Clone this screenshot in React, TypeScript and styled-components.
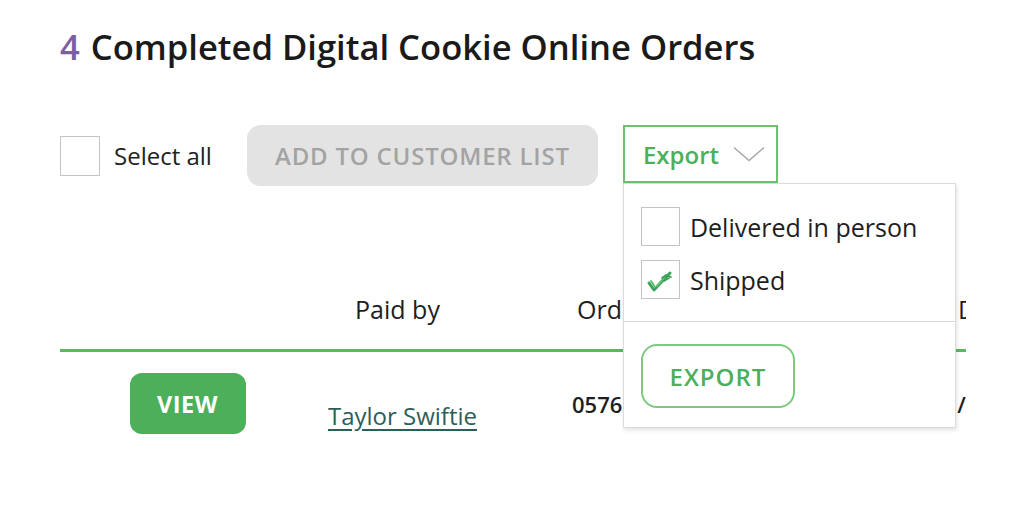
import React, {useState} from "react";
import styled, {createGlobalStyle} from "styled-components";

const GlobalStyle = createGlobalStyle`
  body {
    margin: 0;
    background: #fff;
    font-family: 'Open Sans', 'Noto Sans', sans-serif;
    color: #1e1e1e;
  }
`;

const Page = styled.div`
  padding: 24px 46px 0 60px;
  width: 906px;
`;

const Title = styled.h1`
  margin: 0;
  font-size: 34.6px;
  line-height: 46px;
  font-weight: 600;
  color: #1a1a1a;
`;

const Count = styled.span`
  color: #7b5ea7;
  margin-right: 2px;
`;

const Toolbar = styled.div`
  margin-top: 55px;
  display: flex;
  align-items: flex-start;
`;

const SelectAll = styled.label`
  display: flex;
  align-items: center;
  gap: 14px;
  height: 61px;
  font-size: 24px;
  color: #222;
  margin-right: 35px;
`;

const Box = styled.span<{size: number}>`
  display: inline-flex;
  align-items: center;
  justify-content: center;
  width: ${p => p.size}px;
  height: ${p => p.size}px;
  box-sizing: border-box;
  border: 1.5px solid #c4c4c4;
  background: #fff;
  flex-shrink: 0;
`;

const AddButton = styled.button`
  width: 351px;
  height: 61px;
  padding: 0;
  border: none;
  border-radius: 14px;
  background: #e3e3e3;
  color: #a3a3a3;
  font-family: inherit;
  font-size: 24px;
  font-weight: 600;
  letter-spacing: 0.8px;
  margin-right: 25px;
`;

const ExportWrap = styled.div`
  position: relative;
`;

const ExportTrigger = styled.button`
  width: 155px;
  height: 58px;
  box-sizing: border-box;
  border: 2px solid #6cc070;
  background: #fff;
  display: flex;
  align-items: center;
  padding: 0 0 0 18px;
  gap: 14px;
  font-family: inherit;
  font-size: 24px;
  font-weight: 600;
  color: #4caf5a;
`;

const Menu = styled.div`
  position: absolute;
  top: 58px;
  left: 0;
  width: 333px;
  box-sizing: border-box;
  background: #fff;
  border: 1px solid #dcdcdc;
  box-shadow: 1px 2px 4px rgba(0, 0, 0, 0.12);
  z-index: 5;
`;

const MenuOptions = styled.div`
  padding: 23px 17px 22px;
  display: flex;
  flex-direction: column;
  gap: 14px;
  border-bottom: 1px solid #d9d9d9;
`;

const Option = styled.label`
  display: flex;
  align-items: center;
  gap: 10px;
  font-size: 25px;
  font-weight: 500;
  color: #1e1e1e;
`;

const MenuFooter = styled.div`
  padding: 22px 17px 19px;
`;

const ExportButton = styled.button`
  width: 154px;
  height: 64px;
  padding: 0;
  border: 2px solid #7cc97f;
  border-radius: 16px;
  background: #fff;
  color: #4caf5a;
  font-family: inherit;
  font-size: 24px;
  font-weight: 600;
  letter-spacing: 1px;
`;

const Table = styled.div`
  margin-top: 107px;
  width: 906px;
  overflow: hidden;
`;

const Row = styled.div<{head?: boolean}>`
  display: grid;
  grid-template-columns: 255px 165px 464px 200px;
  width: 1084px;
  align-items: ${p => (p.head ? "end" : "center")};
  border-bottom: ${p => (p.head ? "3px solid #5cb85c" : "none")};
  padding: ${p => (p.head ? "0 0 24px" : "21px 0 0")};
`;

const Cell = styled.div<{align?: string; indent?: number; drop?: number}>`
  font-size: 25px;
  line-height: 32px;
  text-align: ${p => p.align || "left"};
  margin-left: ${p => p.indent || 0}px;
  margin-top: ${p => p.drop || 0}px;
  white-space: nowrap;
`;

const Bold = styled(Cell)`
  font-weight: 600;
  font-size: 22px;
`;

const ViewButton = styled.button`
  width: 116px;
  height: 61px;
  padding: 0;
  border: none;
  border-radius: 12px;
  background: #4caf5a;
  color: #fff;
  font-family: inherit;
  font-size: 23.5px;
  font-weight: 700;
  letter-spacing: 0.5px;
`;

const PayerLink = styled.a`
  font-size: 24px;
  color: #2c5e5a;
  text-decoration: underline;
  text-underline-offset: 4px;
`;

const Chevron = () => (
  <svg width="32" height="16" viewBox="0 0 32 16">
    <path d="M1 1.5 L16 14.5 L31 1.5" fill="none" stroke="#a8a8a8" strokeWidth="1.5"/>
  </svg>
);

const BrushCheck = () => (
  <svg width="30" height="28" viewBox="0 0 30 28">
    <path d="M4 17 L9 24 L25 7" fill="none" stroke="#3ea35a" strokeWidth="3" strokeLinecap="round" strokeLinejoin="round"/>
    <path d="M6 15 L10 21 M12 20 L19 12" fill="none" stroke="#62bd72" strokeWidth="2" strokeLinecap="round"/>
    <path d="M17 12 L21 9 L26 11 M19 15 L24 12" fill="none" stroke="#3ea35a" strokeWidth="1.8" strokeLinecap="round"/>
  </svg>
);

export default function App() {
  const [open] = useState(true);
  return (
    <>
      <GlobalStyle/>
      <Page>
        <Title><Count>4</Count> Completed Digital Cookie Online Orders</Title>
        <Toolbar>
          <SelectAll><Box size={40}/>Select all</SelectAll>
          <AddButton>ADD TO CUSTOMER LIST</AddButton>
          <ExportWrap>
            <ExportTrigger>Export <Chevron/></ExportTrigger>
            {open && (
              <Menu>
                <MenuOptions>
                  <Option><Box size={39}/>Delivered in person</Option>
                  <Option><Box size={39}><BrushCheck/></Box>Shipped</Option>
                </MenuOptions>
                <MenuFooter>
                  <ExportButton>EXPORT</ExportButton>
                </MenuFooter>
              </Menu>
            )}
          </ExportWrap>
        </Toolbar>
        <Table>
          <Row head>
            <Cell/>
            <Cell align="center">Paid by</Cell>
            <Cell indent={97}>Order number</Cell>
            <Cell indent={14}>Date</Cell>
          </Row>
          <Row>
            <Cell align="center"><ViewButton>VIEW</ViewButton></Cell>
            <Cell align="center" indent={10} drop={24}><PayerLink href="#">Taylor Swiftie</PayerLink></Cell>
            <Bold indent={92}>05763218</Bold>
            <Bold indent={-12}>01/24/2024</Bold>
          </Row>
        </Table>
      </Page>
    </>
  );
}
